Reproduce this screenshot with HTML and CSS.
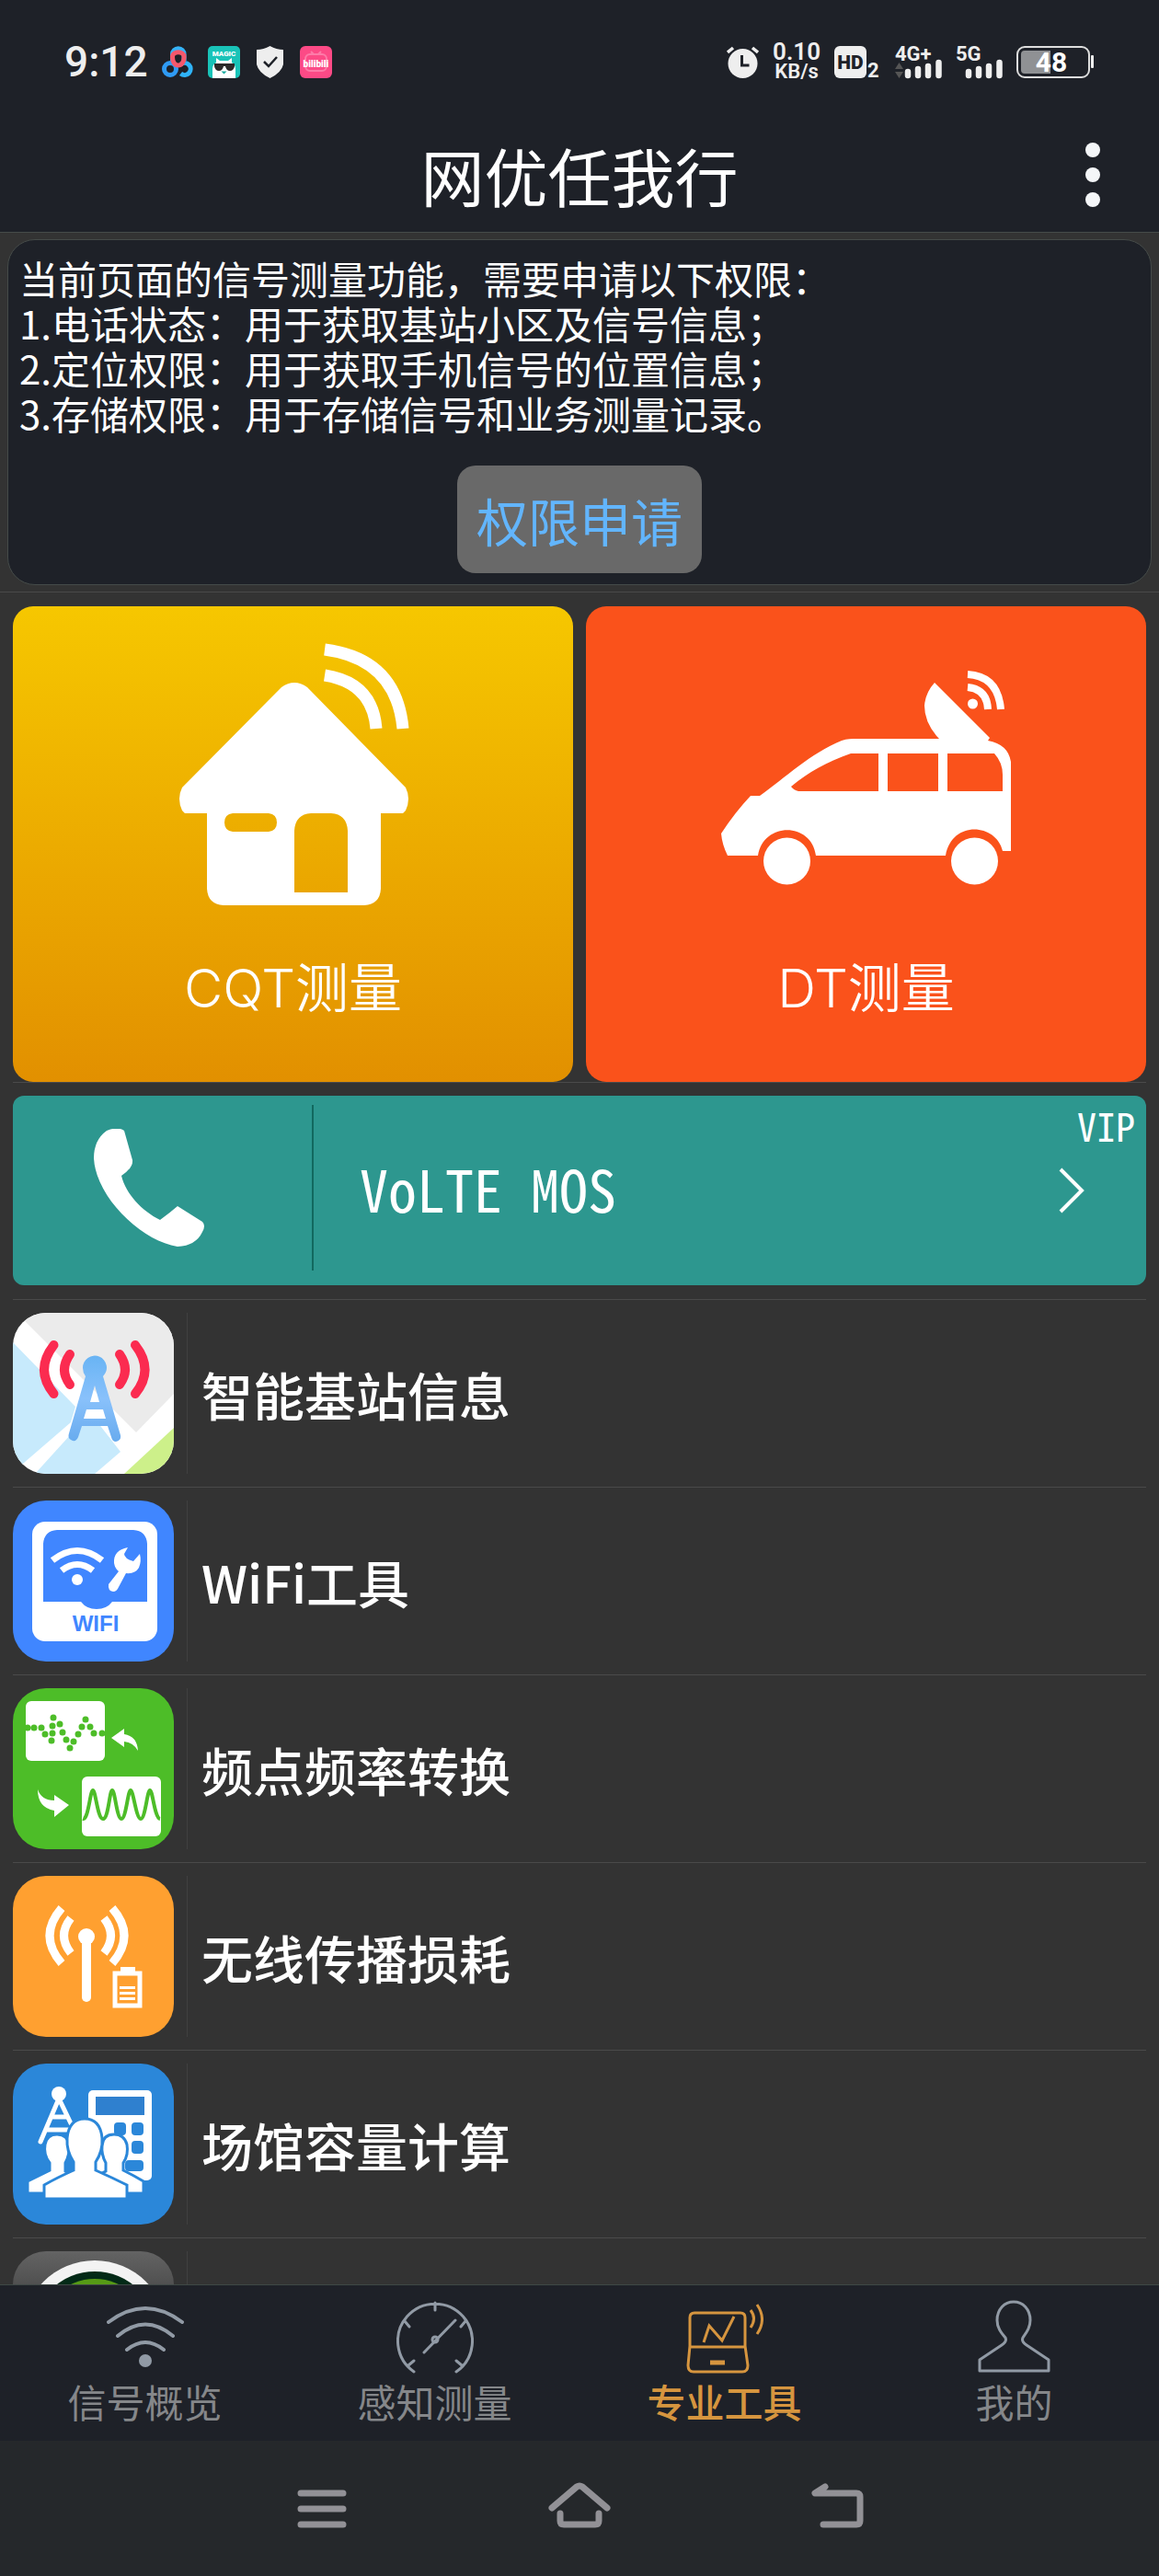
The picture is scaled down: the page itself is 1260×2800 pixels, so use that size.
FILE: index.html
```html
<!DOCTYPE html>
<html lang="zh-CN">
<head>
    <meta charset="UTF-8">
    <meta name="viewport" content="width=device-width, initial-scale=1.0">
    <title>网优任我行</title>
    <link rel="stylesheet" href="styles.css">
</head>
<body>
    <header class="top">
        <div class="status-bar">
            <div class="status-group">
                <span class="clock">9:12</span>
                <svg class="status-icon" viewBox="0 0 35 35" fill="none" stroke-width="5">
                    <circle cx="9" cy="25" r="6.500" stroke="#2f9bf5"/>
                    <path d="M20.500 30A6.500 6.500 0 1 0 20.500 20" stroke="#2fb4fa"/>
                    <path d="M11.500 16V9a6.300 6.300 0 0 1 12.600 0v7" stroke="#35b3f7"/>
                    <path d="M11.500 12c0 12 12.600 12 12.600 0 0-7-12.600-7-12.600 0z" stroke="#f5586c"/>
                </svg>
                <svg class="status-icon" viewBox="0 0 35 35">
                    <rect width="35" height="35" rx="5" fill="#19c3b8"/>
                    <text class="magic-text" x="17.500" y="10.500" text-anchor="middle">MAGIC</text>
                    <path d="M5 35V25q0-5 4-7V13l4 3h9l4-3v5q4 2 4 7v10z" fill="#fff"/>
                    <path d="M7 19h22v3q-1 5-5 5t-5-5h-2q-1 5-5 5t-5-5z" fill="#2d2929"/>
                    <path d="M14.500 27.500h6l-3 3z" fill="#19a99f"/>
                </svg>
                <svg class="status-icon" viewBox="0 0 35 35">
                    <path d="M17.500 0q7 4 14.500 4v16q-2 9-14.500 15Q5 29 3 20V4q7.500 0 14.500-4z" fill="#eee"/>
                    <path d="M11 17l5 5 9-10" fill="none" stroke="#1e2128" stroke-width="2.500"/>
                </svg>
                <svg class="status-icon" viewBox="0 0 35 35">
                    <rect width="35" height="35" rx="6" fill="#fc4a86"/>
                    <rect x="6" y="9" width="23" height="18" rx="5" fill="none" stroke="#fd7ba8" stroke-width="2"/>
                    <path d="M12 6l3 3M23 6l-3 3" stroke="#fd7ba8" stroke-width="2"/>
                    <text class="bili-text" x="17.500" y="23" text-anchor="middle">bilibili</text>
                </svg>
            </div>
            <div class="status-group">
                <svg class="status-icon" viewBox="0 0 35 35">
                    <circle cx="17.500" cy="19" r="16" fill="#eee"/>
                    <path d="M1 7l6-5M34 7l-6-5" stroke="#eee" stroke-width="3.500"/>
                    <path d="M16.500 10v11h8" fill="none" stroke="#1e2128" stroke-width="3"/>
                </svg>
                <span class="speed"><b>0.10</b><small>KB/s</small></span>
                <svg class="status-wide" viewBox="0 0 51 35">
                    <rect width="35" height="35" rx="6" fill="#eee"/>
                    <text class="hd-text" x="17.500" y="25" text-anchor="middle">HD</text>
                    <text class="sig-text" x="36" y="34">2</text>
                </svg>
                <svg class="status-wide" viewBox="0 0 51 35">
                    <text class="sig-text" x="0" y="16">4G+</text>
                    <path d="M0 25l4.500-7 4.500 7zM0 28h9l-4.500 7z" fill="#555"/>
                    <path d="M14 28v4M25 25v7M36 22v10M47.500 18v14" stroke="#eee" stroke-width="6.500" stroke-linecap="round"/>
                </svg>
                <svg class="status-wide" viewBox="0 0 51 35">
                    <text class="sig-text" x="0" y="16">5G</text>
                    <path d="M14 28v4M25 25v7M36 22v10M47.500 18v14" stroke="#eee" stroke-width="6.500" stroke-linecap="round"/>
                </svg>
                <svg class="battery" viewBox="0 0 85 35">
                    <rect x="1" y="1" width="78" height="33" rx="8" fill="none" stroke="#ddd" stroke-width="2"/>
                    <path d="M9 5h28v25H9q-4 0-4-4V9q0-4 4-4z" fill="#8f9194"/>
                    <rect x="81" y="10" width="3" height="14" rx="1" fill="#eee"/>
                    <text class="battery-text" x="38" y="28" text-anchor="middle">48</text>
                </svg>
            </div>
        </div>
        <div class="title-bar">
            <h1>网优任我行</h1>
            <button class="more" aria-label="菜单">
                <svg width="16" height="70" viewBox="0 0 16 70" fill="#f4f6f8">
                    <circle cx="8" cy="8" r="8"/><circle cx="8" cy="35" r="8"/><circle cx="8" cy="62" r="8"/>
                </svg>
            </button>
        </div>
    </header>

    <main class="content">
        <section class="notice">
            <div class="notice-card">
                <p>当前页面的信号测量功能，需要申请以下权限：<br>
                    1.电话状态：用于获取基站小区及信号信息；<br>
                    2.定位权限：用于获取手机信号的位置信息；<br>
                    3.存储权限：用于存储信号和业务测量记录。</p>
                <button class="apply-btn">权限申请</button>
            </div>
        </section>

        <section class="tiles">
            <a class="tile tile-cqt" href="#">
                <svg width="252" height="288" viewBox="178 39 252 288" fill="#fff">
                    <path fill-rule="evenodd" d="M291 88q14-10 28 0L426 197q6 12 0 25l-3 3h-24v82q-1 17-18 18H228q-17-1-18-18v-82h-24l-3-3q-6-13 0-25zM238 225q-9 1-9 10t9 10h39q9-1 9-10t-9-10zM305 311h58v-67q-1-18-18-19h-22q-17 1-18 19z"/>
                    <path d="M338 47q78 10 85 86M338 75q52 8 56 58" fill="none" stroke="#fff" stroke-width="13"/>
                </svg>
                <span>CQT测量</span>
            </a>
            <a class="tile tile-dt" href="#">
                <svg width="316" height="288" viewBox="147 39 316 288" fill="#fff">
                    <path fill-rule="evenodd" d="M295 144h89q-16-17-16-36 1-14 11-25l60 60-2 3q22 4 25 23v97h-9c-7-30-55-34-62 5H250c-5-37-57-37-63 0h-33q-6-12-7-24 15-23 32-41h10c28-20 55-46 89-60 6-2 11-2 17-2zM288 160c-26 9-46 20-65 36q3 4 8 5h87v-41zM328 160v41h55v-41zM393 160v41h60v-18q0-13-9-23z"/>
                    <circle cx="218.500" cy="277" r="25.500"/>
                    <circle cx="422.500" cy="277" r="25.500"/>
                    <circle cx="420.500" cy="106" r="5.500"/>
                    <path d="M415 74q33 2 36 38M415 88q21 2 22 24" fill="none" stroke="#fff" stroke-width="8"/>
                </svg>
                <span>DT测量</span>
            </a>
        </section>

        <section class="banner-wrap">
            <a class="banner" href="#">
                <span class="banner-phone">
                    <svg width="120" height="128" viewBox="0 0 120 128" fill="#fff">
                        <path d="M14 2q12-5 19 0l9 32q1 8-12 17c5 20 22 38 42 48q11-8 19-15l27 17q4 4 0 11-7 15-27 16C52 122 2 74 0 32Q0 12 14 2z"/>
                    </svg>
                </span>
                <span class="banner-title">VoLTE MOS</span>
                <span class="banner-end">
                    <span>VIP</span>
                    <svg width="28" height="50" viewBox="0 0 28 50" fill="none" stroke="#fff" stroke-width="4">
                        <path d="M2 2l23 23L2 48"/>
                    </svg>
                </span>
            </a>
        </section>

        <nav class="tool-list">
            <a class="tool" href="#">
                <svg class="tool-icon" viewBox="0 0 175 175">
                    <defs>
                        <linearGradient id="tower" x1="0" y1="0" x2="0" y2="1">
                            <stop offset="0" stop-color="#69b4f4"/>
                            <stop offset=".5" stop-color="#89c1fb"/>
                            <stop offset="1" stop-color="#68abee"/>
                        </linearGradient>
                    </defs>
                    <path d="M0 0h175v175H0z" fill="#fff"/>
                    <path d="M4 0h171v88l-41 42z" fill="#ebebeb"/>
                    <path d="M0 32l68 70-5 17-51 44-12 12zM24 175l49-54 16-6 28 36-28 24z" fill="#c7eafc"/>
                    <path d="M175 125v50h-54z" fill="#cdf08a"/>
                    <g fill="none" stroke="#fb2b50" stroke-width="10" stroke-linecap="round">
                        <path d="M44.500 35q-21 27 0 53M62 45q-12 17 0 33M133 35q21 27 0 53M116 45q12 17 0 33"/>
                    </g>
                    <path d="M76 60a13 13 0 1 1 22 9l19 64q1 6-5 7-4 0-5-5l-4-12H75l-4 12q-2 5-6 4-6-2-4-8l18-62q-3-4-3-9zM84 97h10l-5-18zM80 105l-3 10h24l-3-10z" fill="url(#tower)" fill-rule="evenodd"/>
                </svg>
                <span>智能基站信息</span>
            </a>
            <a class="tool" href="#">
                <svg class="tool-icon" viewBox="0 0 175 175">
                    <path d="M0 0h175v175H0z" fill="#4086ff"/>
                    <rect x="21" y="23" width="136" height="130" rx="14" fill="#fff"/>
                    <path d="M33 110V47q1-14 15-15h83q14 1 15 15v63h-38q-6 8-17 8t-17-8z" fill="#4086ff"/>
                    <path d="M43 65q27-21 54 0M53 76q17-13 34 0" fill="none" stroke="#fff" stroke-width="7"/>
                    <circle cx="70" cy="86" r="6" fill="#fff"/>
                    <path d="M125 51q-16 3-15 17 1 6 5 9l-11 14q-1 7 5 8 4 0 6-5l8-15q10 1 14-6 3-7 1-15l-7 8q-10-3-10-8z" fill="#fff"/>
                    <text class="wifi-text" x="90" y="142" text-anchor="middle">WIFI</text>
                </svg>
                <span>WiFi工具</span>
            </a>
            <a class="tool" href="#">
                <svg class="tool-icon" viewBox="0 0 175 175">
                    <path d="M0 0h175v175H0z" fill="#4dbd28"/>
                    <rect x="14" y="14" width="86" height="65" rx="6" fill="#fff"/>
                    <rect x="75" y="96" width="86" height="65" rx="6" fill="#fff"/>
                    <path d="M16 43h0M23 43h0M31 43h0M35 50h0M42 57h0M43 49h0M43 41h0M44 32h0M51 39h0M54 48h0M58 56h0M62 65h0M66 58h0M71 50h0M75 42h0M79 34h0M84 42h0M88 49h0M97 49h0" stroke="#4dbd28" stroke-width="7" stroke-linecap="round"/>
                    <path d="M76 142c6 2 8-31 11-31s5 31 11 31 7-31 10-31 5 31 10 31 7-31 10-31 6 31 11 31 7-31 10-31 5 30 11 31" fill="none" stroke="#4dbd28" stroke-width="4"/>
                    <path d="M107 54l14-10v6q14 2 15 18-5-9-15-10v6zM61 127l-16-11v6q-14 0-18-12 0 20 18 23v7z" fill="#fff"/>
                </svg>
                <span>频点频率转换</span>
            </a>
            <a class="tool" href="#">
                <svg class="tool-icon" viewBox="0 0 175 175">
                    <path d="M0 0h175v175H0z" fill="#ffa030"/>
                    <circle cx="80" cy="66" r="9" fill="#fff"/>
                    <path d="M80 66v66" stroke="#fff" stroke-width="10" stroke-linecap="round"/>
                    <path d="M53 35q-26 30 0 60M63 46q-15 19 0 38M108 35q26 30 0 60M99 46q15 19 0 38" fill="none" stroke="#fff" stroke-width="9"/>
                    <path d="M111 106h27v35h-27z" fill="none" stroke="#fff" stroke-width="5"/>
                    <path d="M117 99h16v6h-16zM116 120h17v3h-17zM116 126h17v3h-17zM116 132h17v3h-17z" fill="#fff"/>
                </svg>
                <span>无线传播损耗</span>
            </a>
            <a class="tool" href="#">
                <svg class="tool-icon" viewBox="0 0 175 175">
                    <path d="M0 0h175v175H0z" fill="#2b87d9"/>
                    <circle cx="50" cy="33" r="8" fill="#fff"/>
                    <path d="M50 38L30 85M50 38l13 27M42 58h17M37 72h25" fill="none" stroke="#fff" stroke-width="5" stroke-linecap="round"/>
                    <rect x="82" y="29" width="69" height="98" rx="5" fill="#fff"/>
                    <path d="M90 36h53v20H90z" fill="#2f80cf"/>
                    <g fill="#2b87d9">
                        <rect x="110" y="64" width="13" height="14" rx="4"/>
                        <rect x="129" y="64" width="13" height="14" rx="4"/>
                        <rect x="129" y="84" width="13" height="14" rx="4"/>
                        <rect x="122" y="105" width="20" height="12" rx="4"/>
                    </g>
                    <g fill="#fff" stroke="#2b87d9" stroke-width="3">
                        <path d="M16 141v-13q12-6 24-12v-8q-7-9-5-20 2-11 13-11 12 0 13 12 1 10-4 19v9l20 10v14z"/>
                        <path d="M142 141v-13q-10-6-22-12v-8q6-9 4-20-3-11-14-11-12 0-13 12-1 10 4 19v9l-20 10v14z"/>
                        <path d="M34 147v-15q14-8 32-16v-9q-8-12-7-26 2-21 19-21t19 21q1 14-7 26v9q18 8 34 16v15z"/>
                    </g>
                </svg>
                <span>场馆容量计算</span>
            </a>
            <a class="tool" href="#">
                <svg class="tool-icon" viewBox="0 0 175 175">
                    <defs>
                        <linearGradient id="metal" x1="0" y1="0" x2="0" y2="1">
                            <stop offset="0" stop-color="#636363"/>
                            <stop offset=".3" stop-color="#484848"/>
                        </linearGradient>
                    </defs>
                    <path d="M0 0h175v175H0z" fill="url(#metal)"/>
                    <circle cx="89" cy="89" r="79" fill="#f3f3f3"/>
                    <circle cx="89" cy="89" r="67" fill="#032a17"/>
                    <circle cx="89" cy="89" r="59" fill="#569a16"/>
                </svg>
                <span></span>
            </a>
        </nav>
    </main>

    <footer>
        <nav class="tabs">
            <a class="tab" href="#">
                <svg class="tab-icon" viewBox="0 0 84 80" fill="none" stroke="#919aa5" stroke-width="4" stroke-linecap="round">
                    <path d="M2 24q40-30 80 0M12 39q30-25 60 0M22 54q20-16 40 0"/>
                    <circle cx="42" cy="66" r="7" fill="#919aa5" stroke="none"/>
                </svg>
                <span>信号概览</span>
            </a>
            <a class="tab" href="#">
                <svg class="tab-icon" viewBox="0 0 84 80" fill="none" stroke="#919aa5" stroke-width="3" stroke-linecap="round">
                    <path d="M19 78a40.500 40.500 0 1 1 46 0M42 3v8M9 23l5 6M75 23l-5 6M13 71l6-5M71 71l-6-5M30 57l34-35"/>
                    <circle cx="42" cy="43" r="3"/>
                </svg>
                <span>感知测量</span>
            </a>
            <a class="tab active" href="#">
                <svg class="tab-icon" viewBox="0 0 84 80" fill="none" stroke="#d6953f" stroke-width="3">
                    <path d="M4 50V19q0-5 5-5h50q5 0 5 5v31l3 21q0 7-6 7H8q-6 0-6-7zM4 51h60"/>
                    <path d="M19 46l6-18 14 16 13-26M70 11q7 9 0 19M77 5q11 16 0 32"/>
                    <path d="M26 68h16" stroke-width="5"/>
                </svg>
                <span>专业工具</span>
            </a>
            <a class="tab" href="#">
                <svg class="tab-icon" viewBox="0 0 84 80" fill="none" stroke="#919aa5" stroke-width="3" stroke-linejoin="round">
                    <path d="M4 77V65l24-16q6-4 4-8c-5-6-9-11-9-19 0-12 8-20 18-20s18 8 18 20c0 8-4 13-8 19q-2 4 4 8l24 16v12z"/>
                </svg>
                <span>我的</span>
            </a>
        </nav>
        <div class="system-nav">
            <button aria-label="最近任务">
                <svg width="68" height="52" viewBox="0 0 68 52"><path d="M11 12h46M11 29h46M11 46h46"/></svg>
            </button>
            <button aria-label="主页">
                <svg width="68" height="52" viewBox="0 0 68 52"><path d="M4 28L31 5q3-2 6 0l27 23M13 34v8q0 4 4 4h34q4 0 4-4v-8"/></svg>
            </button>
            <button aria-label="返回">
                <svg width="68" height="52" viewBox="0 0 68 52"><path d="M21 5l-11 7h45q4 0 4 4v26q0 4-4 4H19"/></svg>
            </button>
        </div>
    </footer>
</body>
</html>
```
FILE: styles.css
```css
:root {
    --bar: #1e2128;
    --page: #333333;
    --line: #4a4a4a;
    --text: #ffffff;
    --muted: #85878a;
    --accent: #d6953f;
}

* {
    box-sizing: border-box;
    margin: 0;
    padding: 0;
}

body {
    font-family: "Noto Sans CJK SC", sans-serif;
    background: var(--page);
    color: var(--text);
    display: flex;
    flex-direction: column;
    height: 100vh;
    overflow: hidden;
}

a {
    color: inherit;
    text-decoration: none;
}

button {
    font-family: inherit;
    border: none;
    background: none;
    cursor: pointer;
}

svg {
    display: block;
    flex-shrink: 0;
}

/* header */
.top {
    background: var(--bar);
    border-bottom: 1px solid #454b49;
}

.status-bar {
    display: flex;
    justify-content: space-between;
    align-items: center;
    height: 134px;
    padding: 0 70px;
    color: #eeeeee;
}

.status-group {
    display: flex;
    align-items: center;
    gap: 15px;
}

.clock {
    font-family: Roboto, sans-serif;
    font-size: 46px;
    font-weight: 500;
    line-height: 50px;
}

.status-icon {
    width: 35px;
    height: 35px;
}

.status-wide {
    width: 51px;
    height: 35px;
    overflow: visible;
}

.battery {
    width: 85px;
    height: 35px;
}

.speed {
    display: flex;
    flex-direction: column;
    align-items: center;
    font-family: Roboto, sans-serif;
    line-height: 21px;
}

.speed b {
    font-size: 26px;
    font-weight: 600;
}

.speed small {
    font-size: 22px;
    font-weight: 600;
}

.magic-text,
.bili-text {
    font: 900 8px Roboto, sans-serif;
    fill: #ffffff;
}

.bili-text {
    font-size: 10px;
}

.hd-text {
    font: 900 21px Roboto, sans-serif;
    fill: var(--bar);
}

.sig-text {
    font: 700 22px Roboto, sans-serif;
    fill: #eeeeee;
}

.battery-text {
    font: 700 30px Roboto, sans-serif;
    fill: #ffffff;
}

.title-bar {
    display: grid;
    grid-template-columns: 1fr auto 1fr;
    align-items: center;
    height: 118px;
    padding: 0 64px 6px;
}

.title-bar h1 {
    grid-column: 2;
    font-size: 69px;
    font-weight: 400;
    line-height: 80px;
}

.more {
    justify-self: end;
}

/* scrolling page */
.content {
    flex: 1;
    min-height: 0;
    overflow: hidden;
}

.notice {
    padding: 7px 8px;
    border-bottom: 1px solid var(--line);
}

.notice-card {
    display: flex;
    flex-direction: column;
    align-items: center;
    gap: 33px;
    padding: 16px 12px 12px;
    background: var(--bar);
    border: 1px solid #454b49;
    border-radius: 30px;
}

.notice-card p {
    align-self: stretch;
    font-size: 42px;
    line-height: 49px;
}

.apply-btn {
    padding: 0 21px;
    font-size: 56px;
    line-height: 117px;
    color: #62b5fd;
    background: #696969;
    border-radius: 20px;
}

.tiles {
    display: grid;
    grid-template-columns: 1fr 1fr;
    gap: 14px;
    margin: 0 14px;
    padding-top: 15px;
    border-bottom: 1px solid var(--line);
}

.tile {
    display: flex;
    flex-direction: column;
    align-items: center;
    gap: 53px;
    padding: 39px 0 67px;
    border-radius: 22px;
    font-family: Inter, "Noto Sans CJK SC", sans-serif;
    font-size: 58px;
    font-weight: 350;
    line-height: 70px;
}

.tile-cqt {
    background: linear-gradient(#f6c700, #e29000);
}

.tile-dt {
    background: #fa521b;
}

.banner-wrap {
    margin: 0 14px;
    padding: 14px 0 15px;
}

.banner {
    display: flex;
    align-items: stretch;
    min-height: 206px;
    padding: 10px 12px 16px 0;
    background: #2d978f;
    border-radius: 12px;
}

.banner-phone {
    display: flex;
    align-items: center;
    padding: 0 117px 0 88px;
    border-right: 2px solid #12695f;
}

.banner-title {
    align-self: center;
    flex: 1;
    padding-left: 50px;
    font-family: "Noto Sans Mono CJK SC", "Liberation Mono", monospace;
    font-size: 62px;
    line-height: 70px;
}

.banner-end {
    display: flex;
    flex-direction: column;
    align-items: flex-end;
    gap: 24px;
    font-family: "Noto Sans Mono CJK SC", "Liberation Mono", monospace;
    font-size: 42px;
    line-height: 44px;
}

.banner-end svg {
    margin-right: 55px;
}

.tool-list {
    margin: 0 14px;
}

.tool {
    display: flex;
    align-items: center;
    padding: 14px 0;
    border-top: 1px solid var(--line);
    font-size: 56px;
    font-weight: 500;
}

.tool-icon {
    width: 175px;
    height: 175px;
    border-radius: 36px;
}

.tool span {
    margin-left: 14px;
    padding-left: 15px;
    line-height: 175px;
    min-height: 175px;
    border-left: 1px solid #404040;
}

.wifi-text {
    font: 700 24px "Liberation Sans", sans-serif;
    fill: #4086ff;
}

/* bottom bars */
.tabs {
    display: flex;
    padding: 16px 0;
    background: var(--bar);
    border-top: 1px solid #3f4846;
}

.tab {
    flex: 1;
    display: flex;
    flex-direction: column;
    align-items: center;
    gap: 2px;
    font-size: 42px;
    line-height: 55px;
    color: var(--muted);
}

.tab.active {
    color: var(--accent);
    font-weight: 500;
}

.tab-icon {
    width: 84px;
    height: 80px;
}

.system-nav {
    display: grid;
    grid-template-columns: repeat(3, 1fr);
    align-items: center;
    height: 147px;
    padding: 0 210px 6px;
    background: #25282b;
}

.system-nav button {
    display: flex;
    justify-content: center;
}

.system-nav svg {
    fill: none;
    stroke: #929196;
    stroke-width: 7;
    stroke-linecap: round;
    stroke-linejoin: round;
}
```
